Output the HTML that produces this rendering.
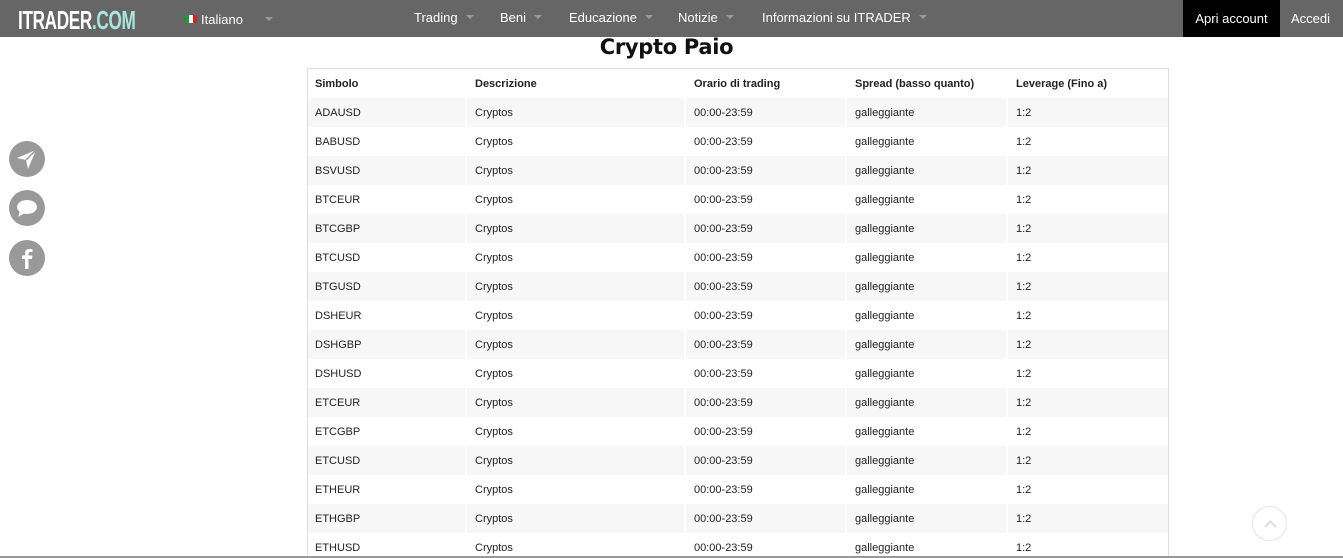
<!DOCTYPE html>
<html><head><meta charset="utf-8"><style>
*{margin:0;padding:0;box-sizing:border-box}
html,body{width:1343px;height:558px;overflow:hidden}
body{background:#fff;font-family:"Liberation Sans",Arial,sans-serif;position:relative}
.hdr{position:absolute;left:0;top:0;width:1343px;height:37px;background:#666;color:#fff}
.logo{position:absolute;left:18px;top:5px;font-size:26px;font-weight:bold;letter-spacing:-0.5px;transform:scaleX(0.66);transform-origin:left;color:#fff;white-space:nowrap}
.logo span{color:#a8e6de}
.lang{position:absolute;left:185px;top:12px;font-size:13px}
.flag{display:inline-block;width:12px;height:8px;background:linear-gradient(90deg,#1a9a3a 33%,#fff 33% 66%,#d2232a 66%);vertical-align:1px;margin-right:4px}
.car{display:inline-block;width:0;height:0;border-left:4px solid transparent;border-right:4px solid transparent;border-top:4px solid #999;vertical-align:3px;margin-left:8px}
.nav{position:absolute;top:10px;font-size:13px}
.apri{position:absolute;left:1183px;top:0;width:97px;height:37px;background:#000;font-size:13px;text-align:center;line-height:37px}
.acc{position:absolute;left:1291px;top:0;font-size:13px;line-height:37px}
h1{position:absolute;left:0;width:1333px;text-align:center;top:35px;font-size:21px;font-weight:bold;color:#111;font-family:"DejaVu Sans",sans-serif;letter-spacing:-0.3px}
.tbl{position:absolute;left:307px;top:68px;width:862px;border:1px solid #ddd;border-bottom:none;height:490px;overflow:hidden}
table{border-collapse:separate;border-spacing:2px 0;margin-left:-3px;width:866px;font-size:11px;color:#222}
td,th{height:29px;padding:0 8px;text-align:left;vertical-align:middle}
th{font-weight:bold;height:29px;font-size:11px}
tr:nth-child(odd) td{background:#f7f7f7}
.soc{position:absolute;left:9px;width:36px;height:36px;border-radius:50%;background:#999}
.up{position:absolute;left:1252px;top:506px;width:35px;height:35px;border:1px solid #e3e3e3;border-radius:50%}
.bot{position:absolute;left:0;top:556px;width:1343px;height:2px;background:#999}
</style></head><body>
<div class="hdr">
<div class="logo">ITRADER<span>.COM</span></div>
<div class="lang"><span class="flag"></span>Italiano<span class="car" style="margin-left:22px"></span></div>
<div class="nav" style="left:414px">Trading<span class="car"></span></div>
<div class="nav" style="left:500px">Beni<span class="car"></span></div>
<div class="nav" style="left:569px">Educazione<span class="car"></span></div>
<div class="nav" style="left:678px">Notizie<span class="car"></span></div>
<div class="nav" style="left:762px">Informazioni su ITRADER<span class="car"></span></div>
<div class="apri">Apri account</div>
<div class="acc">Accedi</div>
</div>
<h1>Crypto Paio</h1>
<div class="tbl"><table>
<colgroup><col style="width:158px"><col style="width:217px"><col style="width:159px"><col style="width:159px"><col></colgroup>
<thead><tr><th>Simbolo</th><th>Descrizione</th><th>Orario di trading</th><th>Spread (basso quanto)</th><th>Leverage (Fino a)</th></tr></thead>
<tbody>
<tr><td>ADAUSD</td><td>Cryptos</td><td>00:00-23:59</td><td>galleggiante</td><td>1:2</td></tr>
<tr><td>BABUSD</td><td>Cryptos</td><td>00:00-23:59</td><td>galleggiante</td><td>1:2</td></tr>
<tr><td>BSVUSD</td><td>Cryptos</td><td>00:00-23:59</td><td>galleggiante</td><td>1:2</td></tr>
<tr><td>BTCEUR</td><td>Cryptos</td><td>00:00-23:59</td><td>galleggiante</td><td>1:2</td></tr>
<tr><td>BTCGBP</td><td>Cryptos</td><td>00:00-23:59</td><td>galleggiante</td><td>1:2</td></tr>
<tr><td>BTCUSD</td><td>Cryptos</td><td>00:00-23:59</td><td>galleggiante</td><td>1:2</td></tr>
<tr><td>BTGUSD</td><td>Cryptos</td><td>00:00-23:59</td><td>galleggiante</td><td>1:2</td></tr>
<tr><td>DSHEUR</td><td>Cryptos</td><td>00:00-23:59</td><td>galleggiante</td><td>1:2</td></tr>
<tr><td>DSHGBP</td><td>Cryptos</td><td>00:00-23:59</td><td>galleggiante</td><td>1:2</td></tr>
<tr><td>DSHUSD</td><td>Cryptos</td><td>00:00-23:59</td><td>galleggiante</td><td>1:2</td></tr>
<tr><td>ETCEUR</td><td>Cryptos</td><td>00:00-23:59</td><td>galleggiante</td><td>1:2</td></tr>
<tr><td>ETCGBP</td><td>Cryptos</td><td>00:00-23:59</td><td>galleggiante</td><td>1:2</td></tr>
<tr><td>ETCUSD</td><td>Cryptos</td><td>00:00-23:59</td><td>galleggiante</td><td>1:2</td></tr>
<tr><td>ETHEUR</td><td>Cryptos</td><td>00:00-23:59</td><td>galleggiante</td><td>1:2</td></tr>
<tr><td>ETHGBP</td><td>Cryptos</td><td>00:00-23:59</td><td>galleggiante</td><td>1:2</td></tr>
<tr><td>ETHUSD</td><td>Cryptos</td><td>00:00-23:59</td><td>galleggiante</td><td>1:2</td></tr>
</tbody></table></div>
<div class="soc" style="top:141px"><svg width="36" height="36" viewBox="0 0 36 36"><path d="M8 17 L27 9 L19 28 L17 19 Z" fill="#fff"/><path d="M17 19 L27 9" stroke="#999" stroke-width="1.5"/></svg></div>
<div class="soc" style="top:190px"><svg width="36" height="36" viewBox="0 0 36 36"><ellipse cx="18" cy="17" rx="10" ry="7" fill="#fff"/><path d="M11 21 L9 27 L16 23 Z" fill="#fff"/></svg></div>
<div class="soc" style="top:240px"><svg width="36" height="36" viewBox="0 0 36 36"><path d="M19.5 29 V19 H23 L23.5 15.5 H19.5 V13.5 C19.5 12.5 20 12 21 12 H23.5 V9 H20.5 C17.5 9 16 10.5 16 13.5 V15.5 H13 V19 H16 V29 Z" fill="#fff"/></svg></div>
<div class="up"><svg width="35" height="35" viewBox="0 0 35 35"><path d="M12 20 L17.5 14.5 L23 20" stroke="#ddd" stroke-width="2" fill="none"/></svg></div>
<div class="bot"></div>
</body></html>
